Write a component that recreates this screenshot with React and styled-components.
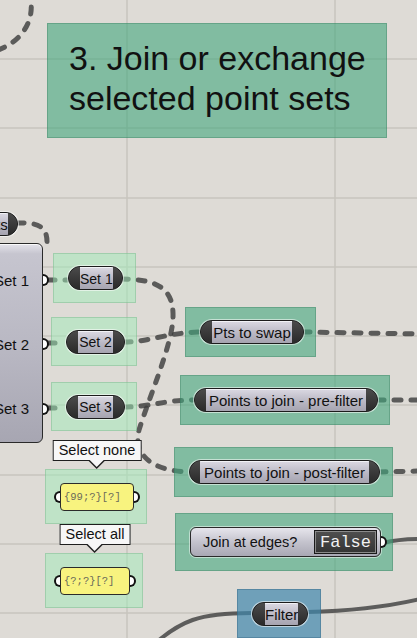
import React from 'react';
import styled, { createGlobalStyle } from 'styled-components';

const GlobalStyle = createGlobalStyle`
  html, body {
    margin: 0;
    padding: 0;
    background: #dedbd6;
  }
`;

const SANS = `'Liberation Sans', Arial, Helvetica, sans-serif`;
const MONO = `'Liberation Mono', 'Courier New', monospace`;

const GROUP_TONES = {
  dark: { bg: 'rgba(67, 167, 125, 0.6)', line: 'rgba(40, 110, 80, 0.3)' },
  light: { bg: 'rgba(160, 235, 184, 0.5)', line: 'rgba(90, 160, 110, 0.3)' },
  blue: { bg: 'rgba(64, 136, 172, 0.7)', line: 'rgba(30, 80, 110, 0.3)' },
};

const Canvas = styled.div`
  position: relative;
  width: 417px;
  height: 638px;
  overflow: hidden;
  background: #dedbd6;
  font-family: ${SANS};
`;

const WireLayer = styled.svg`
  position: absolute;
  inset: 0;
  width: 417px;
  height: 638px;
`;

// a group sits on the canvas at its own spot and wraps its node with padding
const Group = styled.div`
  position: absolute;
  left: ${p => p.$x}px;
  top: ${p => p.$y}px;
  width: ${p => p.$w}px;
  height: ${p => p.$h}px;
  box-sizing: border-box;
  display: flex;
  align-items: center;
  padding-left: ${p => p.$pad ?? 14}px;
  background: ${p => GROUP_TONES[p.$tone].bg};
  border: 1px solid ${p => GROUP_TONES[p.$tone].line};
`;

const Comment = styled(Group)`
  display: block;
  padding: 14px 0 0 21px;
  font-size: 34px;
  line-height: 40px;
  color: #111;
  white-space: nowrap;
`;

const Pill = styled.div`
  flex: none;
  width: ${p => p.$w}px;
  height: 24px;
  box-sizing: border-box;
  display: flex;
  align-items: stretch;
  border: 1.5px solid #1c1c1c;
  border-radius: 12px;
  overflow: hidden;
  background: #333;
  box-shadow: 0 0 0 1px rgba(255, 255, 255, 0.55);
`;

const EdgePill = styled(Pill)`
  position: absolute;
  left: -25px;
  top: 212px;
`;

const PillCap = styled.span`
  flex: none;
  width: ${p => p.$w || 10}px;
  background: linear-gradient(#4b4b4b, #2a2a2a);
`;

const PillBody = styled.span`
  flex: 1;
  display: flex;
  align-items: center;
  justify-content: center;
  background: linear-gradient(#d8d6e0, #b9b7c3 55%, #a6a4b0);
  border-top: 1px solid #f2f2f6;
  font-size: ${p => (p.$small ? 14 : 15)}px;
  color: #111;
  white-space: nowrap;
`;

const BigComponent = styled.div`
  position: absolute;
  left: -12px;
  top: 243px;
  width: 55px;
  height: 200px;
  box-sizing: border-box;
  padding: 4px 0 1px;
  display: flex;
  flex-direction: column;
  border: 1.5px solid #2a2a2a;
  border-radius: 6px;
  background: linear-gradient(#e4e3ea 0%, #c6c5cf 5%, #b8b7c2 55%, #a7a6b2 100%);
  box-shadow: inset 0 1px 0 #fafafa;
`;

const OutputRow = styled.div`
  position: relative;
  flex: 1;
  display: flex;
  align-items: center;
  justify-content: flex-end;
  padding-right: 13px;
  font-size: 15px;
  color: #111;
  white-space: nowrap;
`;

const Grip = styled.span`
  position: absolute;
  top: 50%;
  ${p => (p.$side === 'left' ? 'left: -7px;' : 'right: -7px;')}
  width: 4px;
  height: 8px;
  margin-top: -6px;
  background: #fff;
  border: 2px solid #111;
  ${p =>
    p.$side === 'left'
      ? 'border-right: none; border-radius: 6px 0 0 6px;'
      : 'border-left: none; border-radius: 0 6px 6px 0;'}
`;

const Panel = styled.div`
  position: relative;
  flex: none;
  width: ${p => p.$w}px;
  height: 28px;
  box-sizing: border-box;
  display: flex;
  align-items: center;
  padding-left: 3px;
  background: #f8f37f;
  border: 1.5px solid #2b2b2b;
  border-radius: 4px;
  font-family: ${MONO};
  font-size: 10.5px;
  color: #6a6a5a;
`;

const Tag = styled.div`
  position: absolute;
  left: 50%;
  bottom: calc(100% + 23px);
  transform: translateX(-50%);
  height: 21px;
  box-sizing: border-box;
  display: flex;
  align-items: center;
  padding: 0 5px;
  background: #f7f7f7;
  border: 1px solid #1e1e1e;
  font-family: ${SANS};
  font-size: 14.5px;
  color: #111;
  white-space: nowrap;

  &::before,
  &::after {
    content: '';
    position: absolute;
    left: 50%;
    width: 0;
    height: 0;
    border-style: solid;
  }
  &::before {
    top: 20px;
    margin-left: -8px;
    border-width: 8px 8px 0 8px;
    border-color: #1e1e1e transparent transparent transparent;
  }
  &::after {
    top: 19px;
    margin-left: -7px;
    border-width: 7px 7px 0 7px;
    border-color: #f7f7f7 transparent transparent transparent;
  }
`;

const Toggle = styled.div`
  position: relative;
  flex: none;
  width: 191px;
  height: 30px;
  box-sizing: border-box;
  display: flex;
  align-items: center;
  padding: 0 3px 0 12px;
  border: 1.5px solid #2a2a2a;
  border-radius: 6px;
  background: linear-gradient(#e6e5ec, #c4c3cd 50%, #a9a8b4);
  box-shadow: 0 0 0 1px rgba(255, 255, 255, 0.5);
  font-size: 14.5px;
  color: #111;
`;

const ToggleValue = styled.span`
  margin-left: auto;
  width: 63px;
  height: 24px;
  box-sizing: border-box;
  display: flex;
  align-items: center;
  justify-content: center;
  background: linear-gradient(#505050, #333);
  border: 1px solid #1a1a1a;
  box-shadow: inset 0 0 0 1px #8a8a8a;
  font-family: ${MONO};
  font-size: 17px;
  color: #f2f2f2;
`;

const GRID_Y = [59, 128, 198, 267, 336, 405, 475, 544, 613];
const GRID_X = [127, 335];

const DASHED = [
  'M-2,50 C20,42 36,22 30,-4',
  'M17,223 C40,222 47,228 47,242',
  'M48,280 L67,280',
  'M48,343 L65,343',
  'M48,408 L65,408',
  'M121,279 C160,279 174,290 173,318 C172,345 150,395 139,430 C134,450 145,470 188,472',
  'M124,342 C150,342 165,333 199,332',
  'M124,407 C150,407 165,400 193,400',
  'M303,332 L420,334',
  'M377,400 L420,400',
  'M379,472 L420,471',
];

const SOLID = [
  'M383,543 C395,540 405,539 420,539',
  'M150,648 C180,620 200,613 251,613',
  'M307,612 C350,611 390,606 420,599',
];

function ParamNode({ w, label, small, capL = 11, capR = 11 }) {
  return (
    <Pill $w={w}>
      <PillCap $w={capL} />
      <PillBody $small={small}>{label}</PillBody>
      <PillCap $w={capR} />
    </Pill>
  );
}

function PanelNode({ w, text, tag }) {
  return (
    <Panel $w={w}>
      <Tag>{tag}</Tag>
      <Grip $side="left" />
      {text}
      <Grip $side="right" />
    </Panel>
  );
}

export default function App() {
  return (
    <>
      <GlobalStyle />
      <Canvas>
        <WireLayer viewBox="0 0 417 638">
          {GRID_Y.map(y => (
            <line key={'h' + y} x1="0" x2="417" y1={y} y2={y} stroke="#c7c4be" strokeWidth="1.5" />
          ))}
          {GRID_X.map(x => (
            <line key={'v' + x} x1={x} x2={x} y1="0" y2="638" stroke="#c7c4be" strokeWidth="1.5" />
          ))}
          {DASHED.map(d => (
            <path
              key={d}
              d={d}
              fill="none"
              stroke="rgba(62,62,62,0.82)"
              strokeWidth="5"
              strokeLinecap="round"
              strokeDasharray="7 10"
            />
          ))}
          {SOLID.map(d => (
            <path key={d} d={d} fill="none" stroke="rgba(70,70,70,0.85)" strokeWidth="4" />
          ))}
        </WireLayer>

        <Comment $x={47} $y={23} $w={340} $h={115} $tone="dark">
          3. Join or exchange
          <br />
          selected point sets
        </Comment>

        <EdgePill $w={43}>
          <PillCap $w={10} />
          <PillBody>Pts</PillBody>
          <PillCap $w={10} />
        </EdgePill>

        <BigComponent>
          <OutputRow>
            Set 1
            <Grip $side="right" />
          </OutputRow>
          <OutputRow>
            Set 2
            <Grip $side="right" />
          </OutputRow>
          <OutputRow>
            Set 3
            <Grip $side="right" />
          </OutputRow>
        </BigComponent>

        <Group $x={53} $y={253} $w={83} $h={50} $tone="light">
          <ParamNode w={55} label="Set 1" small />
        </Group>
        <Group $x={51} $y={317} $w={86} $h={49} $tone="light">
          <ParamNode w={59} label="Set 2" small />
        </Group>
        <Group $x={51} $y={382} $w={86} $h={49} $tone="light">
          <ParamNode w={59} label="Set 3" small />
        </Group>

        <Group $x={45} $y={469} $w={102} $h={55} $tone="light">
          <PanelNode w={74} text="{99;?}[?]" tag="Select none" />
        </Group>
        <Group $x={45} $y={553} $w={98} $h={55} $tone="light">
          <PanelNode w={70} text="{?;?}[?]" tag="Select all" />
        </Group>

        <Group $x={185} $y={307} $w={131} $h={50} $tone="dark">
          <ParamNode w={104} label="Pts to swap" />
        </Group>
        <Group $x={180} $y={375} $w={210} $h={50} $tone="dark" $pad={13}>
          <ParamNode w={184} label="Points to join - pre-filter" />
        </Group>
        <Group $x={174} $y={447} $w={219} $h={50} $tone="dark">
          <ParamNode w={191} label="Points to join - post-filter" capL={10} capR={10} />
        </Group>

        <Group $x={175} $y={513} $w={218} $h={58} $tone="dark">
          <Toggle>
            Join at edges?
            <ToggleValue>False</ToggleValue>
            <Grip $side="right" />
          </Toggle>
        </Group>

        <Group $x={237} $y={589} $w={84} $h={49} $tone="blue">
          <ParamNode w={56} label="Filter" capL={12} capR={10} />
        </Group>
      </Canvas>
    </>
  );
}
